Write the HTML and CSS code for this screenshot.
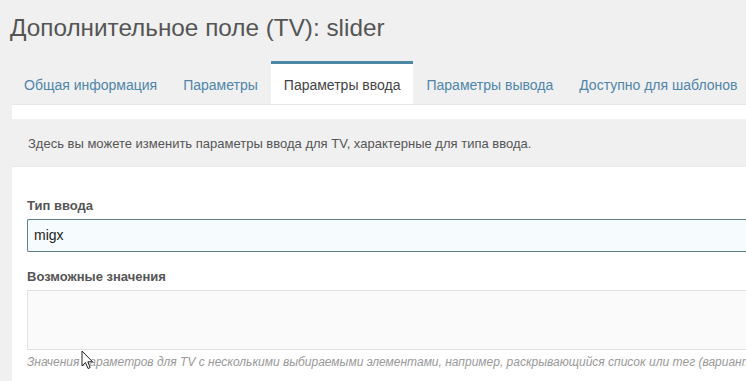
FILE: index.html
```html
<!DOCTYPE html>
<html>
	<head>
		<meta charset="utf-8">
		<link rel="stylesheet" href="styles.css">
	</head>
	<body>
		<h2 class="page-title">Дополнительное поле (TV): slider</h2>
		<div class="tabs">
			<div class="tab">Общая информация</div>
			<div class="tab">Параметры</div>
			<div class="tab active">Параметры ввода</div>
			<div class="tab">Параметры вывода</div>
			<div class="tab">Доступно для шаблонов</div>
		</div>
		<div class="panel">
			<div class="panel-desc">Здесь вы можете изменить параметры ввода для TV, характерные для типа ввода.</div>
			<div class="form">
				<div class="field">
					<label>Тип ввода</label>
					<div class="input">migx</div>
				</div>
				<div class="field">
					<label>Возможные значения</label>
					<div class="textarea"></div>
					<div class="help">Значения параметров для TV с несколькими выбираемыми элементами, например, раскрывающийся список или тег (варианты разделяются ||)</div>
				</div>
			</div>
		</div>
		<svg class="cursor" width="13" height="20" viewBox="0 0 13 20">
			<path d="M1 1 L1 16 L4.5 12.5 L7 18.5 L9.2 17.6 L6.8 11.8 L11.5 11.8 Z" fill="#fff" stroke="#222" stroke-width="1" stroke-linejoin="round"/>
		</svg>
	</body>
</html>
```
FILE: styles.css
```css
html, body {
	margin: 0;
	padding: 0;
}
body {
	background: #f0f0f0;
	font-family: "Liberation Sans", Arial, sans-serif;
	color: #333;
	width: 746px;
	height: 381px;
	overflow: hidden;
	position: relative;
}
.page-title {
	margin: 0;
	padding: 14px 0 0 10px;
	height: 48px;
	box-sizing: border-box;
	font-size: 24.3px;
	font-weight: normal;
	color: #555;
	white-space: nowrap;
}
.tabs {
	display: flex;
	padding-left: 11px;
	margin-top: 13px;
	height: 43px;
	white-space: nowrap;
}
.tab {
	padding: 13px 13px 0 13px;
	font-size: 14px;
	color: #4f86a9;
	box-sizing: border-box;
	height: 40px;
	border-top: 3px solid transparent;
}
.tab.active {
	background: #fff;
	color: #444;
	border-top-color: #4d87a6;
	height: 43px;
	position: relative;
	z-index: 1;
	margin-bottom: -1px;
}
.panel {
	background: #fff;
	margin-left: 12px;
	padding-top: 14px;
	height: 277px;
	border-top: 1px solid #e6e6e6;
	box-sizing: border-box;
	overflow: hidden;
}
.panel-desc {
	background: #f0f0f0;
	height: 48px;
	box-sizing: border-box;
	padding: 17px 16px 0 16px;
	font-size: 13px;
	color: #555;
	white-space: nowrap;
	border-bottom: 1px solid #e8e8e8;
}
.form {
	padding: 31px 0 0 15px;
}
.field {
	margin-bottom: 17px;
}
.field label {
	display: block;
	font-size: 13px;
	font-weight: bold;
	color: #555;
	margin-bottom: 6px;
}
.input {
	height: 33px;
	box-sizing: border-box;
	border: 1px solid #5f7f86;
	border-right: none;
	border-radius: 2px 0 0 2px;
	background: #f6fbfd;
	padding: 7px 6px 0 6px;
	font-size: 14px;
	color: #222;
}
.textarea {
	height: 60px;
	box-sizing: border-box;
	border: 1px solid #e2e2e2;
	border-right: none;
	background: #fafafa;
}
.help {
	margin-top: 5px;
	font-size: 12px;
	font-style: italic;
	color: #999;
	white-space: nowrap;
	overflow: hidden;
}
.cursor {
	position: absolute;
	left: 81px;
	top: 350px;
}
```
